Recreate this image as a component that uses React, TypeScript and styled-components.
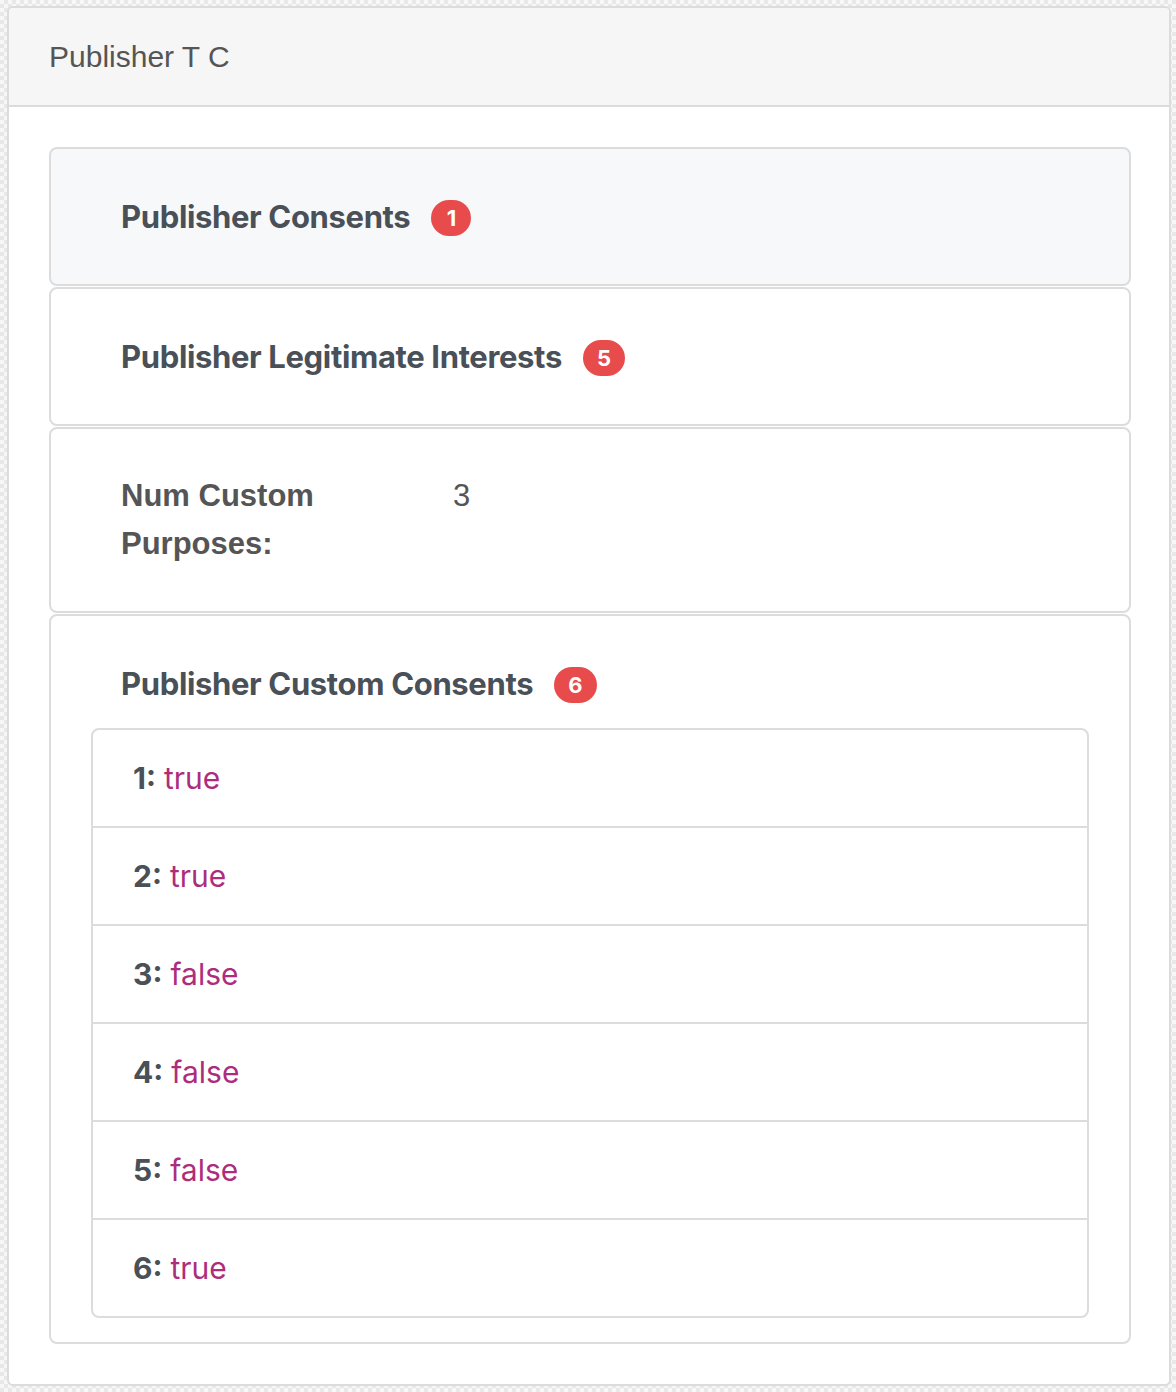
import React from "react";
import styled, { createGlobalStyle } from "styled-components";

const Global = createGlobalStyle`
  html, body { margin: 0; padding: 0; }
  body {
    font-family: "Liberation Sans", Arial, sans-serif;
    background: repeating-conic-gradient(#e8e8e8 0 25%, #f7f7f7 0 50%) 0 0 / 8px 8px;
  }
`;

const Page = styled.div`
  padding: 6px 5px 4px 7px;
`;

const Panel = styled.section`
  border: 2px solid #dcdcdc;
  border-radius: 6px;
  background: #fff;
  overflow: hidden;
`;

const PanelHeading = styled.header`
  height: 97px;
  display: flex;
  align-items: center;
  padding: 0 40px;
  background: #f6f6f6;
  border-bottom: 2px solid #dcdcdc;
  font-family: "Liberation Sans", Arial, sans-serif;
  font-size: 30px;
  color: #555;
`;

const PanelBody = styled.div`
  padding: 40px 38px 40px 40px;
  display: flex;
  flex-direction: column;
  gap: 1px;
`;

const Item = styled.div<{ $shaded?: boolean; $bottom?: number }>`
  border: 2px solid #dcdcdc;
  border-radius: 8px;
  background: ${(p) => (p.$shaded ? "#f7f8fa" : "#fff")};
  padding: 43px 40px ${(p) => (p.$bottom ?? 43)}px 40px;
`;

const Heading = styled.div`
  display: flex;
  align-items: center;
  padding: 0 30px;
  height: 49px;
  font-family: Inter, "Noto Sans", sans-serif;
  font-weight: 700;
  font-size: 31px;
  letter-spacing: -0.35px;
  color: #495057;
`;

const Badge = styled.span`
  display: inline-flex;
  align-items: center;
  justify-content: center;
  margin-left: 21px;
  margin-top: 3px;
  height: 36px;
  min-width: 40px;
  padding: 0 14px;
  box-sizing: border-box;
  border-radius: 18px;
  background: #e84b4b;
  color: #fff;
  font-family: Inter, "Noto Sans", sans-serif;
  font-weight: 700;
  font-size: 22px;
  letter-spacing: 0;
`;

const DefRow = styled.dl`
  display: grid;
  grid-template-columns: 332px 1fr;
  margin: 0;
  padding: 0 30px;
  font-family: "Liberation Sans", Arial, sans-serif;
  font-size: 31px;
  line-height: 48px;
  color: #555;
`;

const Term = styled.dt`
  font-weight: 700;
  margin: 0;
  padding-right: 60px;
`;

const Desc = styled.dd`
  margin: 0;
`;

const List = styled.ul`
  list-style: none;
  margin: 20px 0 0 0;
  padding: 0;
  border: 2px solid #dcdcdc;
  border-radius: 8px;
`;

const Row = styled.li`
  display: flex;
  align-items: center;
  height: 96px;
  padding: 0 40px;
  font-family: Inter, "Noto Sans", sans-serif;
  font-size: 30px;
  & + & {
    border-top: 2px solid #dcdcdc;
  }
`;

const Key = styled.b`
  font-weight: 700;
  color: #495057;
  margin-right: 8px;
`;

const Value = styled.span`
  color: #ad2d7d;
`;

const consents: [number, boolean][] = [
  [1, true],
  [2, true],
  [3, false],
  [4, false],
  [5, false],
  [6, true],
];

export default function App() {
  return (
    <>
      <Global />
      <Page>
        <Panel>
          <PanelHeading>Publisher T C</PanelHeading>
          <PanelBody>
            <Item $shaded>
              <Heading>
                Publisher Consents <Badge>1</Badge>
              </Heading>
            </Item>
            <Item>
              <Heading>
                Publisher Legitimate Interests <Badge>5</Badge>
              </Heading>
            </Item>
            <Item>
              <DefRow>
                <Term>Num Custom Purposes:</Term>
                <Desc>3</Desc>
              </DefRow>
            </Item>
            <Item $bottom={24}>
              <Heading>
                Publisher Custom Consents <Badge>6</Badge>
              </Heading>
              <List>
                {consents.map(([k, v]) => (
                  <Row key={k}>
                    <Key>{k}:</Key>
                    <Value>{String(v)}</Value>
                  </Row>
                ))}
              </List>
            </Item>
          </PanelBody>
        </Panel>
      </Page>
    </>
  );
}
